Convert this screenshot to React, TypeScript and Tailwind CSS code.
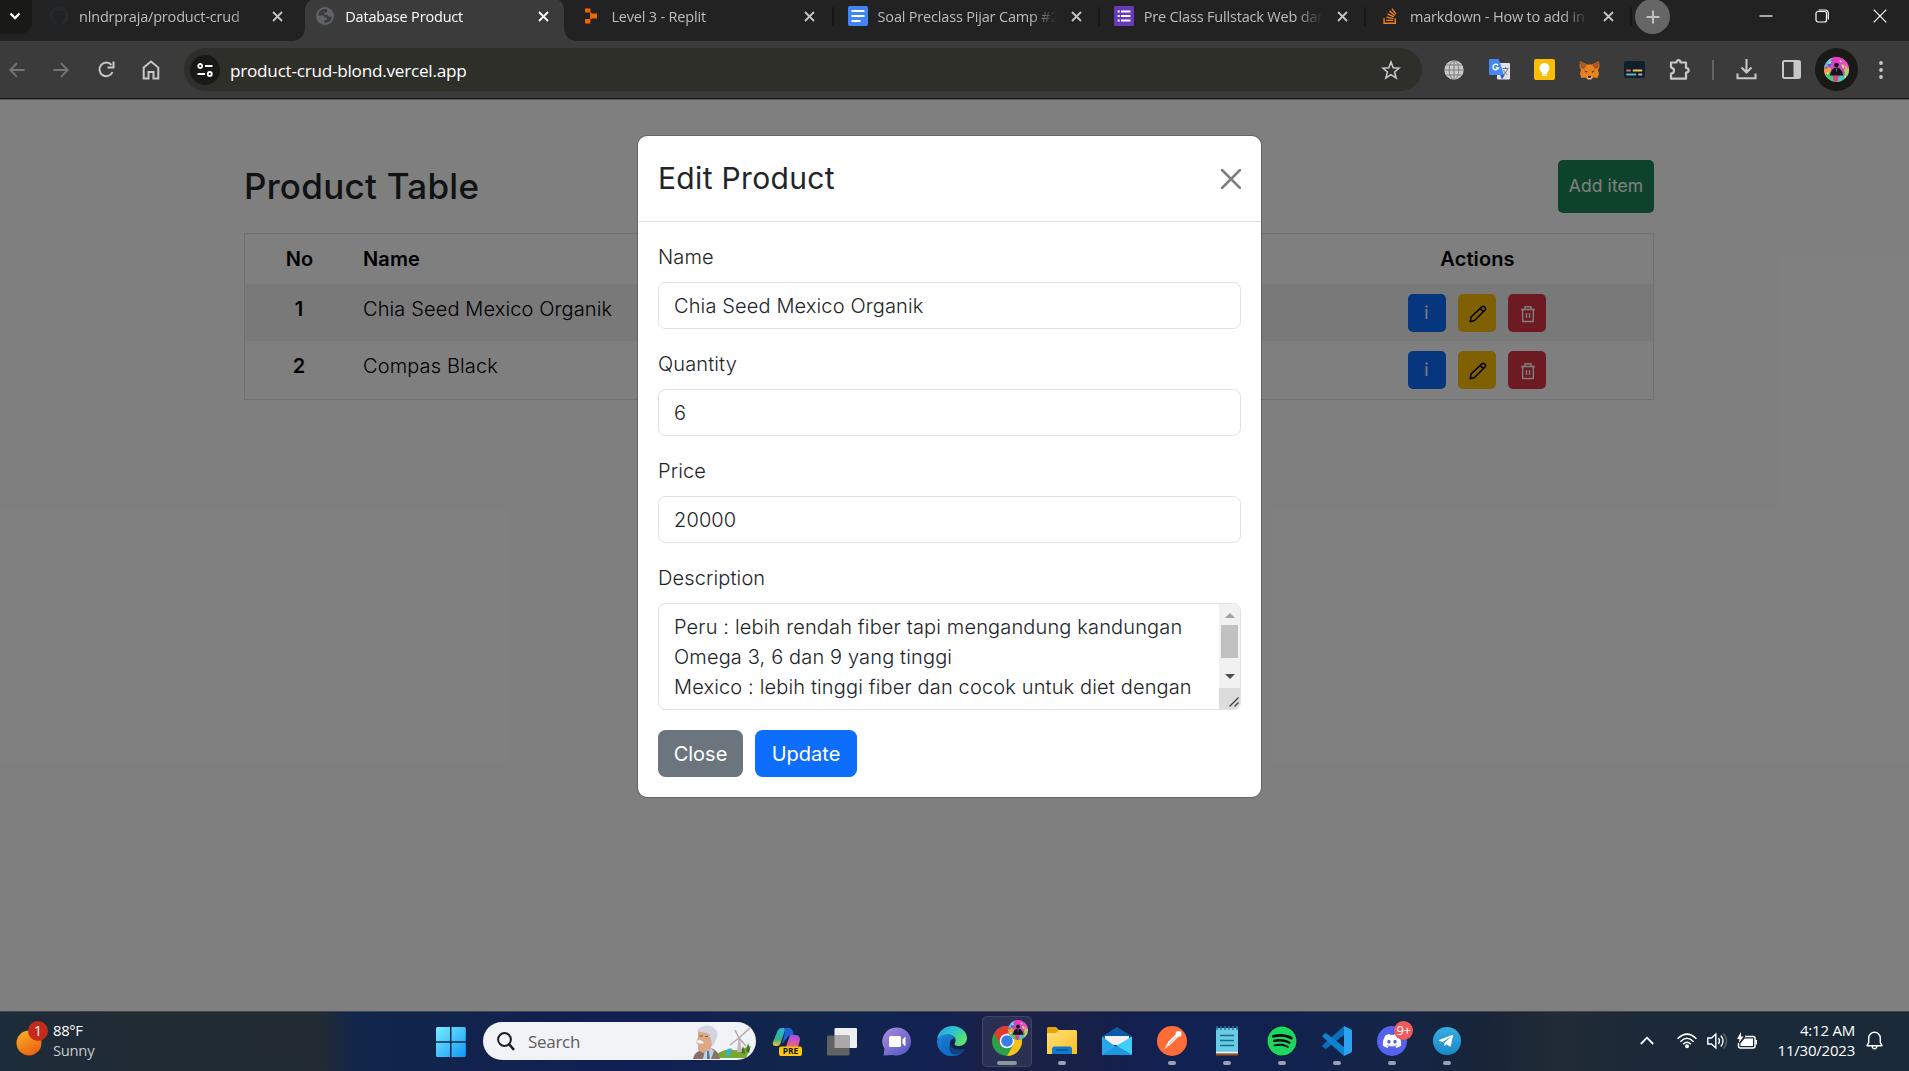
import React from "react";
import { FaGithub, FaDiscord, FaSpotify, FaTelegramPlane, FaStackOverflow } from "react-icons/fa";

type TabInfo = { title: string; icon: React.ReactNode; active?: boolean; divider?: boolean };

function CloseGlyph({ active }: { active?: boolean }) {
  return (
    <svg width="11" height="11" viewBox="0 0 11 11" className="shrink-0">
      <path d="M1 1l9 9M10 1l-9 9" stroke={active ? "#ffffff" : "#c4c4c4"} strokeWidth="1.8" />
    </svg>
  );
}

const tabs: TabInfo[] = [
  { title: "nlndrpraja/product-crud", icon: <FaGithub size={20} color="#24292f" /> },
  {
    title: "Database Product",
    active: true,
    icon: (
      <svg width="18" height="18" viewBox="0 0 18 18">
        <circle cx="9" cy="9" r="9" fill="#5f6368" />
        <path d="M9 2C5 2 2.200 5 2 8.500h4.500c1 0 2 1 2 2H11v2.500H8.500v2.800c4 .2 7.200-2.800 7.300-6.300h-2.300c-1.200 0-2-.8-2-1.800H8.300V5.500h1.500c.9 0 1.500-.7 1.500-1.500V2.400C10.500 2.100 9.800 2 9 2z" fill="#3b3b3b" />
      </svg>
    ),
  },
  {
    title: "Level 3 - Replit",
    divider: true,
    icon: (
      <svg width="16" height="18" viewBox="0 0 16 18">
        <path d="M2 1.500h5.500v4H2zM8 6.500h6v5H8zM2 12h5.500v4.500H2zM7 5.500h1.500V12H7z" fill="#f26207" />
      </svg>
    ),
  },
  {
    title: "Soal Preclass Pijar Camp #2",
    divider: true,
    icon: (
      <svg width="20" height="20" viewBox="0 0 20 20">
        <rect width="20" height="20" rx="2" fill="#4285f4" />
        <path d="M3.500 5h13M3.500 10h13M3.500 15h9" stroke="#fff" strokeWidth="2" />
      </svg>
    ),
  },
  {
    title: "Pre Class Fullstack Web dan",
    divider: true,
    icon: (
      <svg width="20" height="20" viewBox="0 0 20 20">
        <rect width="20" height="20" rx="1.500" fill="#673ab7" />
        <path d="M7 5.500h9.500M7 10h9.500M7 14.500h9.500M3.700 5.500h2M3.700 10h2M3.700 14.500h2" stroke="#fff" strokeWidth="2.200" />
      </svg>
    ),
  },
  { title: "markdown - How to add in", divider: true, icon: <FaStackOverflow size={18} color="#f48024" /> },
];

function Tab({ title, icon, active, divider }: TabInfo) {
  return (
    <div className="relative flex h-[41px] w-[266.200px] shrink-0 items-start">
      {active && (
        <>
          <div className="absolute bottom-0 left-[4px] h-[43px] w-[259px] rounded-t-[12px] bg-[#3b3b3b]" />
          <div className="absolute bottom-0 left-[-8px] size-3 bg-[radial-gradient(circle_at_0_0,#222222_11.500px,#3b3b3b_12px)]" />
          <div className="absolute bottom-0 left-[263px] size-3 bg-[radial-gradient(circle_at_100%_0,#222222_11.500px,#3b3b3b_12px)]" />
        </>
      )}
      <div className="relative flex h-8 w-full items-center">
        <div className="ml-[14px] flex w-[20px] shrink-0 justify-center">{icon}</div>
        <div
          className={
            "ml-[10px] mt-[2px] h-5 w-[182px] shrink-0 overflow-hidden whitespace-nowrap text-[14.500px] leading-5 tracking-[-0.180px] [mask-image:linear-gradient(to_right,#000_152px,transparent_179px)] " +
            (active ? "text-white" : "text-[#bdbdbd]")
          }
        >
          {title}
        </div>
        <div className="ml-[11px] flex">
          <CloseGlyph active={active} />
        </div>
      </div>
      {divider && <div className="absolute right-0 top-[7px] h-[19px] w-[2px] bg-[#181818]" />}
    </div>
  );
}

function TabStrip() {
  return (
    <div className="flex h-[41px] items-start overflow-hidden bg-[#222222]">
      <div className="flex h-[34px] w-[32px] shrink-0 items-center justify-center rounded-br-[12px] bg-[#191916]">
        <svg width="12" height="8" viewBox="0 0 12 8" className="ml-[-3px] mt-[-2px]">
          <path d="M1.500 1.500L6 6l4.500-4.500" stroke="#fff" strokeWidth="2.300" fill="none" />
        </svg>
      </div>
      <div className="ml-[3px] flex">
        {tabs.map((t) => (
          <Tab key={t.title} {...t} />
        ))}
      </div>
      <div className="ml-[3px] mt-[-1px] flex size-[35px] shrink-0 items-center justify-center rounded-full bg-[#666666]">
        <svg width="14" height="14" viewBox="0 0 14 14">
          <path d="M7 .5v13M.5 7h13" stroke="#c0c0c0" strokeWidth="2" />
        </svg>
      </div>
      <div className="ml-auto flex h-[31px] items-center">
        <svg width="14" height="2" viewBox="0 0 14 2" className="mr-[42px]">
          <path d="M.5 1h13" stroke="#fff" strokeWidth="1.200" />
        </svg>
        <svg width="14" height="14" viewBox="0 0 14 14" className="mr-[44px]" fill="none" stroke="#fff" strokeWidth="1.200">
          <rect x="1" y="2.500" width="10.500" height="10.500" rx="2" />
          <path d="M3.500 1h6.500c2 0 3.300 1.300 3.300 3.300v6.200" />
        </svg>
        <svg width="14" height="14" viewBox="0 0 14 14" className="mr-[22px]">
          <path d="M.7.700l12.600 12.600M13.300.700L.7 13.300" stroke="#fff" strokeWidth="1.200" />
        </svg>
      </div>
    </div>
  );
}

function Avatar({ size }: { size: number }) {
  return (
    <svg width={size} height={size} viewBox="0 0 25 25" className="rounded-full">
      <rect width="25" height="25" fill="#c44fc9" />
      <path d="M0 0h9l-3 8-6 3z" fill="#5cc9d8" />
      <path d="M9 0h9l-3 6-6-1z" fill="#ff2fd0" />
      <path d="M18 1l7 6v7l-6-4z" fill="#f24ac8" />
      <path d="M0 12l6-3 2 6-8 4z" fill="#e2a64a" />
      <path d="M20 12l5-1v9l-4-2z" fill="#b5d35a" />
      <path d="M1 18l7-2 2 9H5z" fill="#41d06c" />
      <path d="M16 18l8 0-6 7-6 0z" fill="#4dc7b2" />
      <path d="M17 7l4 2-2 3z" fill="#e6e05c" />
      <path d="M3 7l4 0-1 4z" fill="#7a44e0" />
      <path d="M9 20l4-1 1 5-4 1z" fill="#d94472" />
      <path d="M5 4l2 1-1 2zM15 3l3 1-1 2zM21 9l2 1-1 2zM3 15l2 1-2 2zM20 20l2-2v3z" fill="#e9f06a" />
      <path d="M7 2l2 1-1 2zM2 9l2 2-3 1zM18 13l2 2-2 1z" fill="#d8357c" />
      <circle cx="12.500" cy="8" r="2.300" fill="#161418" />
      <path d="M5.500 18.500l2-5c1.500-2 3-3 5-3s3.500 1 5 3l2 5z" fill="#161418" />
      <path d="M11.800 11.500h1.600l-.8 4z" fill="#8a7d78" />
    </svg>
  );
}

function Slot({ className, children }: { className: string; children: React.ReactNode }) {
  return <div className={"flex shrink-0 items-center justify-center " + className}>{children}</div>;
}

function Toolbar() {
  return (
    <div className="flex h-[57px] items-center bg-[#3b3b3b]">
      <Slot className="w-[34px]">
        <svg width="16" height="16" viewBox="0 0 16 16" fill="none" stroke="#757575" strokeWidth="1.800">
          <path d="M15.500 8H1.500M8 1.200L1.300 8 8 14.800" />
        </svg>
      </Slot>
      <Slot className="ml-[10px] w-[34px]">
        <svg width="16" height="16" viewBox="0 0 16 16" fill="none" stroke="#757575" strokeWidth="1.800">
          <path d="M.5 8h14M8 1.200L14.700 8 8 14.800" />
        </svg>
      </Slot>
      <Slot className="ml-[11px] w-[34px]">
        <svg width="17" height="17" viewBox="0 0 17 17" fill="none" stroke="#c7c7c7" strokeWidth="2">
          <path d="M14.500 11.200A6.800 6.800 0 1 1 13.500 4M15.500 .5V6.500H9.500" />
        </svg>
      </Slot>
      <Slot className="ml-[11px] w-[34px]">
        <svg width="18" height="20" viewBox="0 0 18 20" fill="none" stroke="#c7c7c7" strokeWidth="2">
          <path d="M1.700 7.600L9 1.500l7.300 6.100v11H11.500V12h-5v6.600H1.700z" />
        </svg>
      </Slot>
      <div className="ml-[16px] flex h-[43px] w-[1237.500px] shrink-0 items-center rounded-full bg-[#2f2f2a]">
        <div className="ml-[6px] flex size-[30px] items-center justify-center rounded-full bg-[#191915]">
          <svg width="16" height="14" viewBox="0 0 16 14" fill="none" stroke="#fff" strokeWidth="1.800">
            <circle cx="3.200" cy="3" r="2" />
            <path d="M8 3h7.500M.5 11H8" />
            <circle cx="12.800" cy="11" r="2" />
          </svg>
        </div>
        <span className="ml-[10px] mt-[2px] text-[17.200px] leading-6 tracking-[-0.260px] text-white">product-crud-blond.vercel.app</span>
        <svg width="20" height="20" viewBox="0 0 20 20" fill="none" stroke="#c7c7c7" strokeWidth="1.600" className="ml-auto mr-[21px]">
          <path d="M10 2l2.200 5.700 6 .4-4.600 3.900 1.500 5.900L10 14.600 4.900 17.900l1.500-5.900L1.800 8.100l6-.4z" />
        </svg>
      </div>
      <Slot className="ml-[15px] w-[34px]">
        <svg width="20" height="20" viewBox="0 0 20 20" fill="none">
          <circle cx="10" cy="10" r="9.700" fill="#c9c9c9" />
          <path d="M.5 10h19M10 .5v19M2.500 5h15M2.500 15h15" stroke="#77777a" strokeWidth=".9" />
          <ellipse cx="10" cy="10" rx="4.800" ry="9.500" stroke="#77777a" strokeWidth=".9" />
        </svg>
      </Slot>
      <Slot className="ml-[12px] w-[34px]">
        <svg width="21" height="21" viewBox="0 0 21 21">
          <rect x="8" y="4" width="13" height="16.500" rx="1" fill="#dfe1e4" />
          <path d="M11 15.500h5L13 20.500z" fill="#3257c8" />
          <path d="M1.200 0h8.500l5.300 16H1.200Q0 16 0 14.800V1.200Q0 0 1.200 0z" fill="#4688f1" />
          <path d="M13.500 9.500h6M16.500 8v1.500M18.500 9.500c-.5 3-2.500 5-4 6M14.500 11c1 2.500 2.500 4 4 4.800" stroke="#607988" strokeWidth="1" fill="none" />
          <path d="M9 6.300A2.800 2.800 0 1 0 9.400 9H6.800" stroke="#fff" strokeWidth="1.400" fill="none" />
        </svg>
      </Slot>
      <Slot className="ml-[11px] w-[34px]">
        <svg width="21" height="21" viewBox="0 0 21 21">
          <rect width="21" height="21" rx="2" fill="#fbbc04" />
          <path d="M10.500 4a5 5 0 0 0-2.700 9.200V15h5.400v-1.800A5 5 0 0 0 10.500 4zM8 15.500h5v1.500H8z" fill="#fff" />
        </svg>
      </Slot>
      <Slot className="ml-[11px] w-[34px]">
        <svg width="21" height="20" viewBox="0 0 21 20">
          <path d="M1 1l7 3.500h5L20 1l.5 6-1.500 3 1 4-1.500 4-4-.5-2.500 2H9l-2.500-2-4 .5L1 14l1-4L.5 7z" fill="#e8821e" />
          <path d="M1 1l7 3.500L5 9 1.500 8zM20 1l-7 3.500L16 9l3.500-1z" fill="#a8591f" />
          <path d="M5 10.500l3.500 1-1 1.200zM16 10.500l-3.500 1 1 1.200z" fill="#3a3227" />
          <path d="M8 16h5l-1 3.200H9z" fill="#d8c9bb" />
          <path d="M8.800 16h3.400l-.5 1.800H9.300z" fill="#161616" />
        </svg>
      </Slot>
      <Slot className="ml-[11px] w-[34px]">
        <svg width="21" height="17" viewBox="0 0 21 17">
          <rect width="21" height="17" rx="2" fill="#10202b" />
          <g strokeWidth="1.800" strokeLinecap="round">
            <path d="M3 9.500h3" stroke="#ef5e6c" />
            <path d="M9.500 9.500h8" stroke="#f2c14b" />
            <path d="M3 13.500h8.500" stroke="#5ab9b0" />
            <path d="M15 13.500h2.500" stroke="#c79bd8" />
          </g>
        </svg>
      </Slot>
      <Slot className="ml-[11px] w-[34px]">
        <svg width="22" height="22" viewBox="0 0 22 22" fill="none" stroke="#c7c7c7" strokeWidth="2.200" strokeLinejoin="round">
          <path d="M2 3.500h5.500c0-3.200 4-3.200 4 0H17v5.500c3.500 0 3.500 4.500 0 4.500v6.200H2v-5c4-.5 4-5.700 0-6.200z" />
        </svg>
      </Slot>
      <div className="ml-[15px] h-[20px] w-[2px] shrink-0 bg-[#646464]" />
      <Slot className="ml-[16px] w-[34px]">
        <svg width="21" height="21" viewBox="0 0 21 21" fill="none" stroke="#c7c7c7" strokeWidth="2.100">
          <path d="M10.500 0v13M5.500 8.500l5 5 5-5M1.500 14.500v4.700h18v-4.700" />
        </svg>
      </Slot>
      <Slot className="ml-[11px] w-[34px]">
        <svg width="19" height="19" viewBox="0 0 19 19">
          <rect x="1" y="1" width="17" height="17" rx="1.500" fill="none" stroke="#c7c7c7" strokeWidth="2" />
          <path d="M11.500 1h6.500v17h-6.500z" fill="#c7c7c7" />
        </svg>
      </Slot>
      <div className="ml-[6px] flex size-[43px] shrink-0 items-center justify-center rounded-full bg-[#191915]">
        <Avatar size={25} />
      </div>
      <Slot className="ml-[6px] w-[34px]">
        <svg width="4" height="18" viewBox="0 0 4 18" fill="#c7c7c7">
          <circle cx="2" cy="2" r="1.900" />
          <circle cx="2" cy="9" r="1.900" />
          <circle cx="2" cy="16" r="1.900" />
        </svg>
      </Slot>
    </div>
  );
}

const rows = [
  { no: 1, name: "Chia Seed Mexico Organik" },
  { no: 2, name: "Compas Black" },
];

function ProductPage() {
  return (
    <div className="w-[1898px] pt-[60px]">
      <div className="mx-auto w-[1410px]">
        <div className="flex items-start justify-between">
          <h2 className="mt-[5px] text-[35px] font-medium leading-[42px] tracking-[0.270px] text-[#212529]">Product Table</h2>
          <button className="h-[53px] w-[96px] rounded-[5px] bg-[#198754] text-[17.500px] tracking-[0.100px] text-white">Add item</button>
        </div>
        <div className="mt-[20px] border border-[#dee2e6] text-[20px] leading-[30px] tracking-[0.120px] text-black">
          <div className="grid h-[50px] grid-cols-[109px_1fr_354px] pt-[10px] font-semibold">
            <div className="text-center">No</div>
            <div className="pl-[9px]">Name</div>
            <div className="pl-[3px] text-center">Actions</div>
          </div>
          {rows.map((r) => (
            <div
              key={r.no}
              className={"grid grid-cols-[109px_1fr_354px] pt-[10px] " + (r.no === 1 ? "h-[57px] bg-[#f2f2f2]" : "h-[58px]")}
            >
              <div className="pr-px text-center font-semibold">{r.no}</div>
              <div className="pl-[9px] font-light">{r.name}</div>
              <div className="flex justify-center gap-[12px] pl-px">
                <button className="flex h-[38px] w-[38px] items-center justify-center rounded-[5px] bg-[#0d6efd] pb-[1px] text-[17.500px] text-white">
                  i
                </button>
                <button className="flex h-[38px] w-[38px] items-center justify-center rounded-[5px] bg-[#ffc107] pl-[2px] pt-[2px]">
                  <svg width="18" height="18" viewBox="0 0 18 18" fill="none" stroke="#000" strokeWidth="1.500" strokeLinejoin="round">
                    <path d="M1.200 16.700l.9-4.700L12.800 1.900c1.900-1.500 4.800 1 3.200 3.100L5.500 15.500zM11.300 3.700l3.300 3.200" />
                  </svg>
                </button>
                <button className="flex h-[38px] w-[38px] items-center justify-center rounded-[5px] bg-[#dc3545] pl-[2px] pt-[2px]">
                  <svg width="16" height="18" viewBox="0 0 16 18" fill="none" stroke="#fff" strokeWidth="1.400" strokeLinejoin="round">
                    <path d="M1 4.500h14M5 4.500V1.700h6v2.800M2.700 4.500v12h10.600v-12M6.500 8v5M9.500 8v5" />
                  </svg>
                </button>
              </div>
            </div>
          ))}
        </div>
      </div>
    </div>
  );
}

function Field({ label, value }: { label: string; value: string }) {
  return (
    <div className="mb-[20px]">
      <div className="mb-[10px] h-[30px]">{label}</div>
      <div className="h-[47px] rounded-[7.500px] border border-[#dee2e6] px-[15px] pt-[8px]">{value}</div>
    </div>
  );
}

function EditDialog() {
  return (
    <div className="h-[663px] w-[625px] rounded-[10px] border border-black/20 bg-white bg-clip-padding text-[20px] font-light leading-[30px] tracking-[0.130px] text-[#212529]">
      <div className="flex h-[86px] items-center justify-between border-b border-[#dee2e6] px-[20px]">
        <h4 className="text-[30px] font-normal leading-[45px] tracking-[0.340px]">Edit Product</h4>
        <svg width="20" height="20" viewBox="0 0 20 20">
          <path d="M1 1l18 18M19 1L1 19" stroke="#7f7f7f" strokeWidth="2.500" strokeLinecap="round" />
        </svg>
      </div>
      <div className="px-[20px] pt-[20px]">
        <Field label="Name" value="Chia Seed Mexico Organik" />
        <Field label="Quantity" value="6" />
        <Field label="Price" value="20000" />
        <div className="mb-[10px] h-[30px]">Description</div>
        <div className="mb-[20px] flex h-[107px] overflow-hidden rounded-[7.500px] border border-[#dee2e6]">
          <div className="flex-1 whitespace-nowrap pl-[15px] pt-[8px] tracking-[0.145px]">
            <div>Peru : lebih rendah fiber tapi mengandung kandungan</div>
            <div>Omega 3, 6 dan 9 yang tinggi</div>
            <div>Mexico : lebih tinggi fiber dan cocok untuk diet dengan</div>
          </div>
          <div className="flex w-[21px] flex-col items-center bg-[#f1f1f1]">
            <svg width="10" height="21" viewBox="0 0 10 21">
              <path d="M0 14l5-5 5 5z" fill="#a3a3a3" />
            </svg>
            <div className="h-[33px] w-[17px] bg-[#c1c1c1]" />
            <svg width="10" height="30" viewBox="0 0 10 30">
              <path d="M0 16h10l-5 5z" fill="#505050" />
            </svg>
            <div className="flex w-full flex-1 items-end justify-end bg-[#dcdcdc] pb-[2px] pr-px">
              <svg width="10" height="10" viewBox="0 0 10 10">
                <path d="M.5 9.500l9-9M5.500 9.500l4-4" stroke="#404040" strokeWidth="1.300" />
              </svg>
            </div>
          </div>
        </div>
        <div className="flex gap-[12px] font-normal tracking-normal text-white">
          <button className="h-[47px] w-[85px] rounded-[7.500px] bg-[#6c757d]">Close</button>
          <button className="h-[47px] w-[102px] rounded-[7.500px] bg-[#0d6efd]">Update</button>
        </div>
      </div>
    </div>
  );
}

function TaskIcon({ children, running, wide }: { children: React.ReactNode; running?: boolean; wide?: boolean }) {
  return (
    <div className="relative flex h-full w-[55px] shrink-0 items-center justify-center">
      {wide && <div className="absolute inset-x-[2.500px] inset-y-[4px] rounded-[5px] border border-white/10 bg-white/[0.07]" />}
      <div className="relative mb-px flex">{children}</div>
      {running && (
        <div className={"absolute bottom-[6px] h-[4px] rounded-full " + (wide ? "w-[20px] bg-[#869a9c]" : "w-[8px] bg-[#9ba1b3]")} />
      )}
    </div>
  );
}

function Taskbar() {
  return (
    <div className="flex h-[60px] items-stretch border-t border-[#42474f] bg-[linear-gradient(90deg,#1c2c3a_0px,#212b34_130px,#222b34_320px,#12264b_355px,#11244b_440px,#111f54_640px,#11264a_790px,#112152_930px,#1c2145_1010px,#162049_1100px,#112152_1170px,#11224f_1290px,#152545_1400px,#172439_1480px,#222b35_1560px,#1b2938_1640px,#1a2a38_1909px)]">
      <div className="flex w-[436px] shrink-0 items-center">
        <div className="relative ml-[16px] mt-[-2px] h-[38px] w-[37px]">
          <svg width="26" height="26" viewBox="0 0 26 26" className="mt-[8px]">
            <defs>
              <linearGradient id="sun" x1="0" y1="0" x2=".6" y2="1">
                <stop offset="0" stopColor="#f9b52b" />
                <stop offset="1" stopColor="#ee6410" />
              </linearGradient>
            </defs>
            <circle cx="13" cy="13" r="12.500" fill="url(#sun)" />
          </svg>
          <div className="absolute left-[12px] top-[-1px] flex size-[20px] items-center justify-center rounded-full bg-[#c42b1c] text-[14px] text-white">1</div>
        </div>
        <div className="mt-[-3px] text-[14.800px] leading-[20px] tracking-[-0.300px]">
          <div className="text-white">88°F</div>
          <div className="text-[#c5c9cd]">Sunny</div>
        </div>
      </div>
      <div className="flex w-[30px] shrink-0 items-center">
        <svg width="30" height="30" viewBox="0 0 30 30">
          <defs>
            <linearGradient id="win" x1="0" y1="0" x2="1" y2="1">
              <stop offset="0" stopColor="#7ceefe" />
              <stop offset="1" stopColor="#0d98f8" />
            </linearGradient>
          </defs>
          <path d="M1.500 0H14v14.300H0V1.500Q0 0 1.500 0zM15.500 0h12.800q1.500 0 1.500 1.500v12.800H15.500zM0 15.700h14V30H1.500Q0 30 0 28.500zM15.500 15.700h14.300v12.800q0 1.500-1.500 1.500H15.500z" fill="url(#win)" />
        </svg>
      </div>
      <div className="ml-[17px] mt-[10px] flex h-[38px] w-[273px] shrink-0 items-center overflow-hidden rounded-full bg-[#f1f3f6]">
        <svg width="18" height="19" viewBox="0 0 18 19" fill="none" stroke="#1f1f1f" strokeWidth="2" className="ml-[14px]">
          <circle cx="7.500" cy="7.500" r="6.400" />
          <path d="M12 12.200l5 5.600" strokeWidth="2.500" />
        </svg>
        <span className="ml-[13px] mt-px text-[17px] leading-6 tracking-[-0.300px] text-[#5d5d60]">Search</span>
        <svg width="60" height="34" viewBox="0 0 60 34" className="ml-auto mr-[3px] mt-[2px]">
          <path d="M22 30c7-5 12-6 18-5 6 1 12-3 18-4l-5 12H22z" fill="#79a832" />
          <path d="M30 32c8-1 1-5 5-8 3-1 6 0 3 2-2 2 0 4-3 6z" fill="#2fb4dd" />
          <path d="M53 26l2-8 2 6-1 4zM48 28l2-7 2 6v2z" fill="#48702d" />
          <path d="M44 27l1.500-14h1.500l2 14z" fill="#c5b7ba" />
          <path d="M46 13l11-10M46 13l-9 7M46 13l7 8M46 13l-4-8" stroke="#b3a4a8" strokeWidth="1.300" />
          <path d="M0 34c1-6 5-8 9-9l9-2c5 2 8 5 9 11z" fill="#8d6f66" />
          <path d="M10 34l2-9 6-2 3 3-3 8z" fill="#b9d4ee" />
          <path d="M14 26l2 0 1 8h-3z" fill="#60748f" />
          <path d="M5 6c4-3 12-3 14 3l1 8-3 8-7 3-5-3v-5l-2-3 2-4z" fill="#dba985" />
          <path d="M4 6c3-6 14-8 18-2 4 3 2 8 1 11l-3 6c-2-2-1-4-2-6l-2-6c-3-2-7-1-12-3z" fill="#d3d3e2" />
          <path d="M3 16c3-2 6-1 8 2-3 1-6 1-8-2z" fill="#f4f4f8" />
          <path d="M6 11h4M12 11.500h3" stroke="#8a5f45" strokeWidth="1" />
        </svg>
      </div>
      <div className="ml-[3.500px] flex">
        <TaskIcon>
          <svg width="30" height="30" viewBox="0 0 30 30" className="overflow-visible">
            <defs>
              <linearGradient id="cpa" x1="0" y1="0" x2="0" y2="1">
                <stop offset="0" stopColor="#27b4e5" />
                <stop offset=".6" stopColor="#36b287" />
                <stop offset="1" stopColor="#f1c330" />
              </linearGradient>
              <linearGradient id="cpb" x1="0" y1="0" x2="0" y2="1">
                <stop offset="0" stopColor="#a44bea" />
                <stop offset="1" stopColor="#f3647c" />
              </linearGradient>
            </defs>
            <path d="M6 4Q7 2 10 2h6q-3 1-4 5l-3 9q-1 4-4 4H3.500Q0 20 1 16z" fill="url(#cpa)" />
            <path d="M12 2h5q3 0 4 4l1 3h-3q-3 0-4 3l-5 6 3-12z" fill="#1c63d4" />
            <path d="M18 9h7q3 1 3 5l-2 7H14z" fill="url(#cpb)" />
            <rect x="7" y="20.500" width="23" height="9.500" rx="2" fill="#fcc60e" />
            <text x="18.500" y="28.100" textAnchor="middle" fontSize="8.500" fontWeight="700" fontFamily="Open Sans, sans-serif" fill="#18140a">PRE</text>
          </svg>
        </TaskIcon>
        <TaskIcon>
          <svg width="30" height="29" viewBox="0 0 30 29">
            <rect x="7.500" y="1" width="22.500" height="20" rx="1" fill="#eceef0" />
            <rect x="0" y="8.500" width="22.500" height="20" rx="1" fill="#616161" />
            <rect x="7.500" y="8.500" width="15" height="12.500" fill="#a9a9a9" />
          </svg>
        </TaskIcon>
        <TaskIcon>
          <svg width="30" height="29" viewBox="0 0 30 29">
            <defs>
              <linearGradient id="meet" x1="0" y1="0" x2="1" y2="1">
                <stop offset="0" stopColor="#ad8ddf" />
                <stop offset="1" stopColor="#4d55c2" />
              </linearGradient>
            </defs>
            <path d="M15 .5a14 14 0 1 1-4 27.400L1.500 28.500 2.500 22A14 14 0 0 1 15 .5z" fill="url(#meet)" />
            <rect x="7" y="9" width="12" height="11" rx="1.500" fill="#fff" />
            <path d="M20.500 12.500l3-3v10l-3-3z" fill="#fff" />
          </svg>
        </TaskIcon>
        <TaskIcon>
          <svg width="30" height="30" viewBox="0 0 30 30">
            <defs>
              <linearGradient id="edgeTop" x1="0" y1="0" x2="1" y2=".6">
                <stop offset="0" stopColor="#259ede" />
                <stop offset=".5" stopColor="#2dc2d2" />
                <stop offset="1" stopColor="#5be368" />
              </linearGradient>
              <linearGradient id="edgeLow" x1="0" y1="0" x2="1" y2="1">
                <stop offset="0" stopColor="#1f8ae0" />
                <stop offset="1" stopColor="#0d4f9c" />
              </linearGradient>
            </defs>
            <path d="M0 15a15 15 0 0 1 7-8q9-2 10 5-5 2-4 8 4 8 15 3a15 15 0 0 1-28-8z" fill="url(#edgeLow)" />
            <path d="M10 13q-3 8 4 13 4 2 8 1-8 6-15 0-6-9 3-14z" fill="#0f6fc9" />
            <path d="M13 19q4 6 15 4-5 7-13 5-4-4-2-9z" fill="#10427f" />
            <path d="M0 14C1 5 8 0 15 0c9 0 15 6 15 12 0 5-4 8-8 8-4 0-5-1-4-3 2-4-1-8-6-9-5 0-10 2-12 6z" fill="url(#edgeTop)" />
          </svg>
        </TaskIcon>
        <TaskIcon running wide>
          <svg width="30" height="30" viewBox="0 0 30 30">
            <circle cx="15" cy="15" r="15" fill="#2ba14b" />
            <path d="M2 7.500A15 15 0 0 1 28 7.500H15L8.500 18.500z" fill="#e33b2e" />
            <path d="M28 7.500A15 15 0 0 1 15 30L21.500 18.700 15 7.500z" fill="#fbc116" />
            <circle cx="15" cy="15" r="7.300" fill="#fff" />
            <circle cx="15" cy="15" r="5.800" fill="#3a7cec" />
          </svg>
          <div className="absolute left-[16px] top-[-6px]">
            <Avatar size={20} />
          </div>
        </TaskIcon>
        <TaskIcon running>
          <svg width="30" height="28" viewBox="0 0 30 28">
            <defs>
              <linearGradient id="fold" x1="0" y1="0" x2="1" y2="1">
                <stop offset="0" stopColor="#ffe17a" />
                <stop offset="1" stopColor="#fbbf24" />
              </linearGradient>
            </defs>
            <path d="M0 1.500Q0 0 1.500 0H9l3 3h3v6H0z" fill="#e5a30c" />
            <path d="M0 6h9l3-3h16.500Q30 3 30 4.500V27H0z" fill="url(#fold)" />
            <path d="M5 27v-5q0-2.500 2.500-2.500h15q2.500 0 2.500 2.500v5z" fill="#1279cf" />
            <path d="M9 23h12" stroke="#0a4b8c" strokeWidth="1.300" />
          </svg>
        </TaskIcon>
        <TaskIcon>
          <svg width="30" height="28" viewBox="0 0 30 28">
            <path d="M15 0l15 9.500V18H0V9.500z" fill="#0c5ba8" />
            <path d="M3 9h24v9H3z" fill="#f1f1f3" />
            <path d="M0 9.500L17 22 30 28H0z" fill="#2aa5ea" />
            <path d="M30 9.500V28L14 19z" fill="#40cdf7" />
            <path d="M0 28l14.500-9.200L30 28z" fill="#1d97e0" />
          </svg>
        </TaskIcon>
        <TaskIcon running>
          <svg width="30" height="30" viewBox="0 0 30 30">
            <circle cx="15" cy="15" r="15" fill="#ff6c37" />
            <path d="M7 23.500l4.500-8 7-7 2.500 2.500-8 8z" fill="#fff" />
            <path d="M12 18l7-7M7 23.500l5-5" stroke="#ff9b78" strokeWidth=".8" />
            <circle cx="21.500" cy="8" r="3" fill="#fff" />
          </svg>
        </TaskIcon>
        <TaskIcon running>
          <svg width="22" height="30" viewBox="0 0 22 30">
            <rect y="2" width="22" height="26" rx="1" fill="#6bcbe2" />
            <path d="M1 0v4M5 0v4M9 0v4M13 0v4M17 0v4M21 0v4" stroke="#1e7896" strokeWidth="1.500" />
            <path d="M4 9.500h14M4 14.500h14M4 19.500h14" stroke="#16718f" strokeWidth="1.500" />
            <path d="M0 26.500h22" stroke="#f0f0f0" strokeWidth="1.500" />
            <path d="M0 28.500h22" stroke="#a3501f" strokeWidth="2" />
          </svg>
        </TaskIcon>
        <TaskIcon running>
          <div className="rounded-full bg-[#0c0c0c]">
            <FaSpotify size={30} color="#1ed760" />
          </div>
        </TaskIcon>
        <TaskIcon running>
          <svg width="30" height="30" viewBox="0 0 30 30">
            <path d="M22 0v9L4.500 22.500q-1 .6-1.800 0L.8 20.800q-1-.9 0-1.900z" fill="#0a6fbd" />
            <path d="M22 30v-9L4.500 7.500q-1-.6-1.800 0L.8 9.200q-1 .9 0 1.900z" fill="#1182d0" />
            <path d="M22 0l6.800 3.200Q30 3.800 30 5v20q0 1.200-1.200 1.800L22 30z" fill="#2ba3f0" />
          </svg>
        </TaskIcon>
        <TaskIcon running>
          <div className="flex size-[30px] items-center justify-center rounded-full bg-[#5562ee]">
            <FaDiscord size={20} color="#ffffff" />
          </div>
          <div className="absolute left-[17px] top-[-5px] flex size-[19px] items-center justify-center rounded-full bg-[#f05a5a] text-[13px] tracking-tight text-white">9+</div>
        </TaskIcon>
        <TaskIcon running>
          <div className="flex size-[28px] items-center justify-center rounded-full bg-[linear-gradient(#35aee2,#1c88c7)]">
            <FaTelegramPlane size={16} color="#ffffff" className="mr-[2px]" />
          </div>
        </TaskIcon>
      </div>
      <div className="ml-auto flex items-center pb-[2px] pr-[26px]">
        <svg width="14" height="9" viewBox="0 0 14 9" fill="none" stroke="#fff" strokeWidth="1.800" className="mr-[23px]">
          <path d="M.8 8L7 1.700 13.200 8" />
        </svg>
        <svg width="20" height="16" viewBox="0 0 20 16" fill="none" stroke="#fff" strokeWidth="1.500" className="mr-[10px]">
          <path d="M.6 5.800Q10-3.500 19.400 5.800M3.400 8.700Q10 2 16.600 8.700M6.200 11.300Q10 7.300 13.800 11.300" />
          <circle cx="10" cy="13.200" r="2" fill="#fff" stroke="none" />
        </svg>
        <svg width="21" height="18" viewBox="0 0 21 18" fill="none" stroke="#fff" strokeWidth="1.400" className="mr-[9px]">
          <path d="M.8 6v6h3.700l4.300 4V2L4.500 6zM11.300 6q2.400 3 0 6M13.800 3.500q4.500 5.500 0 11" />
          <path d="M16.500 1.500q6 7.500 0 15" stroke="#5b6670" />
        </svg>
        <svg width="21" height="18" viewBox="0 0 21 18" fill="none" className="mr-[10px]">
          <path d="M8 4.500h8q2 0 2 2v7.500q0 2-2 2H3.500q-2 0-2-2V11" stroke="#fff" strokeWidth="1.500" />
          <path d="M7.500 6.500H16V14H3.500v-2.500z" fill="#fff" />
          <path d="M18.500 8H20v4.500h-1.500z" fill="#fff" />
          <path d="M4 0L0 7h2.500L1.800 11 6.500 4.500H4z" fill="#fff" />
        </svg>
        <div className="mt-[-1px] w-[87px] text-right text-[15px] leading-[20px] tracking-[-0.220px] text-white">
          <div>4:12 AM</div>
          <div>11/30/2023</div>
        </div>
        <svg width="17" height="19" viewBox="0 0 17 19" fill="none" stroke="#fff" strokeWidth="1.400" className="ml-[11px]">
          <path d="M1 14.700h15l-1.700-3.200V7A5.800 5.800 0 0 0 2.700 7v4.500zM6 15q.5 2.800 2.500 2.800T11 15" strokeLinejoin="round" />
        </svg>
      </div>
    </div>
  );
}

export default function App() {
  return (
    <div className="flex h-[1071px] w-[1909px] flex-col overflow-hidden font-['Open_Sans',sans-serif]">
      <TabStrip />
      <Toolbar />
      <div className="h-[2px] shrink-0 border-b border-[#555555] bg-[#1d1d1d]" />
      <main className="relative h-[911px] shrink-0 bg-white font-[Inter,sans-serif]">
        <ProductPage />
        <div className="absolute inset-0 flex items-start justify-center bg-black/50 pr-[10px] pt-[35px]">
          <EditDialog />
        </div>
      </main>
      <Taskbar />
    </div>
  );
}
